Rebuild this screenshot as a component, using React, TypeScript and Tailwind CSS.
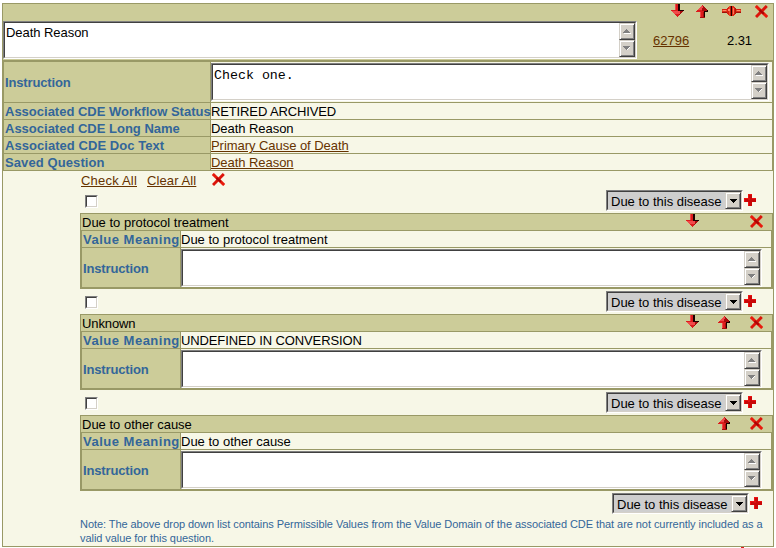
import React from 'react';

type Px = [number, number, number, number, string];

function Pixels({ w, h, rects, className = '' }: { w: number; h: number; rects: Px[]; className?: string }) {
  return (
    <svg width={w} height={h} viewBox={`0 0 ${w} ${h}`} shapeRendering="crispEdges" className={`block shrink-0 ${className}`}>
      {rects.map(([x, y, rw, rh, f], i) => (
        <rect key={i} x={x} y={y} width={rw} height={rh} fill={f} />
      ))}
    </svg>
  );
}

const R = '#dd1c1c';
const D = '#a80d0d';
const L = '#f04a4a';
const K = '#1a0000';

const upRects: Px[] = [
  [6, 0, 1, 1, R], [5, 1, 2, 1, L], [7, 1, 1, 1, D], [4, 2, 3, 1, L], [7, 2, 2, 1, D],
  [3, 3, 3, 1, L], [6, 3, 4, 1, D], [2, 4, 4, 1, L], [6, 4, 5, 1, D], [1, 5, 5, 1, R], [6, 5, 5, 1, D], [11, 5, 1, 1, K],
  [0, 6, 4, 1, R], [4, 6, 4, 1, R], [8, 6, 4, 1, K],
  [4, 7, 3, 5, R], [4, 7, 1, 5, L], [7, 7, 1, 5, D], [8, 7, 1, 5, K], [4, 12, 5, 1, D],
];

const downRects: Px[] = [
  [4, 0, 4, 6, R], [4, 0, 1, 6, L], [7, 0, 2, 6, K],
  [0, 6, 7, 1, R], [7, 6, 6, 1, K], [1, 7, 8, 1, L], [9, 7, 3, 1, D], [2, 8, 7, 1, L], [9, 8, 2, 1, D],
  [3, 9, 6, 1, L], [9, 9, 1, 1, D], [4, 10, 4, 1, R], [8, 10, 1, 1, D], [5, 11, 3, 1, R], [6, 12, 1, 1, R],
];

function Up({ className }: { className?: string }) {
  return <Pixels w={13} h={13} rects={upRects} className={className} />;
}
function Down({ className }: { className?: string }) {
  return <Pixels w={13} h={13} rects={downRects} className={className} />;
}

function Cross({ className = '' }: { className?: string }) {
  return (
    <svg width="13" height="13" viewBox="0 0 13 13" className={`block shrink-0 ${className}`}>
      <path d="M0.8 1L12.2 12" stroke="#e81a0c" strokeWidth="3" />
      <path d="M11.8 1L1 12" stroke="#dc140a" strokeWidth="2.9" />
      <path d="M4.5 5L8.8 8.8" stroke="#a80404" strokeWidth="2.2" />
    </svg>
  );
}

function Plug({ className = '' }: { className?: string }) {
  return (
    <Pixels
      w={19}
      h={12}
      className={className}
      rects={[
        [0, 4, 5, 1, '#d82010'], [0, 5, 19, 1, '#f05030'], [0, 6, 19, 1, '#d83018'], [14, 4, 5, 1, '#d82010'], [0, 7, 5, 1, '#a01008'], [14, 7, 5, 1, '#a01008'],
        [5, 3, 1, 6, '#d82010'], [6, 2, 1, 8, '#d82010'], [7, 1, 1, 10, '#f04828'], [8, 1, 1, 10, '#c01c0c'], [9, 1, 1, 10, '#200000'],
        [10, 1, 2, 10, '#e03018'], [11, 3, 1, 6, '#f87858'], [12, 2, 1, 8, '#d82010'], [13, 3, 1, 6, '#b01808'],
        [6, 4, 2, 2, '#ff8868'], [1, 5, 3, 1, '#ff8868'], [15, 5, 3, 1, '#ff8868'],
      ]}
    />
  );
}

function Plus({ className = '' }: { className?: string }) {
  return (
    <Pixels
      w={12}
      h={12}
      className={className}
      rects={[[4, 0, 4, 12, '#ee1111'], [0, 4, 12, 4, '#ee1111'], [5, 1, 3, 11, '#c80808'], [1, 5, 11, 3, '#c80808'], [4, 4, 2, 2, '#e01010']]}
    />
  );
}

function ScrollButton({ up }: { up?: boolean }) {
  return (
    <div className="flex h-[17px] w-4 items-center justify-center border border-t-[#d4d0c8] border-l-[#d4d0c8] border-r-[#404040] border-b-[#404040] bg-[#d4d0c8] shadow-[inset_1px_1px_0_#fff,inset_-1px_-1px_0_#808080]">
      <Pixels
        w={8}
        h={5}
        rects={
          up
            ? [[3, 0, 1, 1, '#808080'], [2, 1, 3, 1, '#808080'], [1, 2, 5, 1, '#808080'], [0, 3, 7, 1, '#808080'], [1, 4, 7, 1, '#fff']]
            : [[0, 0, 7, 1, '#808080'], [1, 1, 5, 1, '#808080'], [2, 2, 3, 1, '#808080'], [3, 3, 1, 1, '#808080'], [6, 1, 1, 1, '#fff'], [5, 2, 1, 1, '#fff'], [4, 3, 1, 1, '#fff']]
        }
      />
    </div>
  );
}

function TextBox({ children, className }: { children?: React.ReactNode; className: string }) {
  return (
    <div className={`flex h-[38px] shrink-0 justify-between border border-t-[#808080] border-l-[#808080] border-r-white border-b-white bg-white ${className}`}>
      <div className="flex grow justify-between border border-t-[#404040] border-l-[#404040] border-r-[#d4d0c8] border-b-[#d4d0c8]">
        <div className="pl-px leading-[19px]">{children}</div>
        <div className="flex flex-col justify-between bg-[#eae8e4]">
          <ScrollButton up />
          <ScrollButton />
        </div>
      </div>
    </div>
  );
}

function Select() {
  return (
    <div className="flex h-[21px] w-[137px] shrink-0 border border-t-[#808080] border-l-[#808080] border-r-white border-b-white bg-[#cecece]">
      <div className="flex grow justify-between border border-t-[#404040] border-l-[#404040] border-r-[#d4d0c8] border-b-[#d4d0c8]">
        <span className="pl-[3px] text-[13px] leading-[19px]">Due to this disease</span>
        <div className="flex h-[17px] w-4 shrink-0 items-center justify-center border border-t-[#d4d0c8] border-l-[#d4d0c8] border-r-[#404040] border-b-[#404040] bg-[#d4d0c8] shadow-[inset_1px_1px_0_#fff,inset_-1px_-1px_0_#808080]">
          <Pixels w={7} h={4} rects={[[0, 0, 7, 1, '#000'], [1, 1, 5, 1, '#000'], [2, 2, 3, 1, '#000'], [3, 3, 1, 1, '#000']]} />
        </div>
      </div>
    </div>
  );
}

function Checkbox() {
  return (
    <div className="size-[13px] border border-t-[#808080] border-l-[#808080] border-r-white border-b-white">
      <div className="size-[11px] border border-t-[#404040] border-l-[#404040] border-r-[#d4d0c8] border-b-[#d4d0c8] bg-white" />
    </div>
  );
}

function InfoRow({ label, labelClass, children }: { label: string; labelClass: string; children: React.ReactNode }) {
  return (
    <div className="flex h-[17px] border-b border-[#999966] leading-[18px]">
      <div className={`w-[207px] shrink-0 border-r border-[#999966] bg-[#cccc99] pl-px font-bold text-[#336699] ${labelClass}`}>{label}</div>
      {children}
    </div>
  );
}

function ValueBlock({ title, titleClass, meaning, meaningClass, up, down }: {
  title: string; titleClass: string; meaning: string; meaningClass: string; up?: boolean; down?: boolean;
}) {
  return (
    <>
      <div className="flex h-6 pt-px">
        <div className="w-[526px] shrink-0 pt-[5px] pl-[5px]"><Checkbox /></div>
        <Select />
        <Plus className="mt-1 ml-px" />
      </div>
      <div className="h-[76px] w-[693px] border border-[#999966]">
        <div className="flex h-[17px] border-b border-[#999966] bg-[#cccc99] leading-[18px]">
          <span className={`w-[605px] pl-px ${titleClass}`}>{title}</span>
          <div className="w-8">{down && <Down />}</div>
          <div className="w-8">{up && <Up className="mt-px" />}</div>
          <Cross className="mt-px" />
        </div>
        <div className="h-[57px] border-x border-b border-[#999966]">
          <div className="flex h-[17px] border-b border-[#999966] leading-[18px]">
            <div className="w-[99px] shrink-0 border-r border-[#999966] bg-[#cccc99] pl-px font-bold tracking-[0.5px] text-[#336699]">Value Meaning</div>
            <span className={meaningClass}>{meaning}</span>
          </div>
          <div className="flex h-[39px]">
            <div className="flex w-[99px] shrink-0 items-center border-r border-[#999966] bg-[#cccc99] pt-0.5 pl-px font-bold tracking-[-0.15px] text-[#336699]">Instruction</div>
            <TextBox className="mt-px w-[581px]" />
          </div>
        </div>
      </div>
    </>
  );
}

export default function App() {
  return (
    <div className="h-[548px] w-[776px] overflow-hidden bg-white pt-[3px] pl-[2px] font-['Liberation_Sans',Arial,sans-serif] text-[13px] whitespace-nowrap text-black">
      <div className="h-[544px] w-[772px] border border-[#999966] bg-[#f7f7e7]">
        <div className="h-14 bg-[#cccc99]">
          <div className="flex h-[17px] pl-[668px]">
            <Down />
            <Up className="mt-px ml-3" />
            <Plug className="mt-px ml-[13px]" />
            <Cross className="mt-px ml-[14px]" />
          </div>
          <div className="flex">
            <TextBox className="w-[634px]"><span className="tracking-[-0.05px]">Death Reason</span></TextBox>
            <div className="flex w-[136px] pt-px leading-[38px]">
              <span className="w-[90px] pl-4 text-[#663300] underline">62796</span>
              <span className="tracking-[-0.1px]">2.31</span>
            </div>
          </div>
        </div>
        <div className="border-x border-t-2 border-[#999966]">
          <div className="flex h-[41px] border-b border-[#999966]">
            <div className="flex w-[207px] shrink-0 items-center border-r border-[#999966] bg-[#cccc99] pt-0.5 pl-px font-bold tracking-[-0.15px] text-[#336699]">Instruction</div>
            <TextBox className="mt-px w-[558px]"><span className="font-['Liberation_Mono','Courier_New',monospace] text-[13.3px]">Check one.</span></TextBox>
          </div>
          <InfoRow label="Associated CDE Workflow Status" labelClass="tracking-[0px]"><span className="tracking-[-0.13px]">RETIRED ARCHIVED</span></InfoRow>
          <InfoRow label="Associated CDE Long Name" labelClass="tracking-[0px]"><span className="tracking-[-0.05px]">Death Reason</span></InfoRow>
          <InfoRow label="Associated CDE Doc Text" labelClass="tracking-[0.05px]"><span className="tracking-[-0.05px] text-[#663300] underline">Primary Cause of Death</span></InfoRow>
          <InfoRow label="Saved Question" labelClass="tracking-[0.1px]"><span className="tracking-[-0.05px] text-[#663300] underline">Death Reason</span></InfoRow>
        </div>
        <div className="pl-[77px]">
          <div className="flex h-[18px] pl-px leading-[20px] text-[#663300]">
            <span className="w-[66px] tracking-[0.2px]"><span className="underline">Check All</span></span>
            <span className="w-[65px] tracking-[0.1px]"><span className="underline">Clear All</span></span>
            <Cross className="mt-0.5" />
          </div>
          <ValueBlock title="Due to protocol treatment" titleClass="tracking-[0px]" meaning="Due to protocol treatment" meaningClass="tracking-[0px]" down />
          <div className="h-px" />
          <ValueBlock title="Unknown" titleClass="tracking-[-0.1px]" meaning="UNDEFINED IN CONVERSION" meaningClass="tracking-[-0.12px]" up down />
          <div className="h-px" />
          <ValueBlock title="Due to other cause" titleClass="" meaning="Due to other cause" meaningClass="" up />
          <div className="flex h-[26px] pt-[2px] pl-[532px]">
            <Select />
            <Plus className="mt-1 ml-px" />
          </div>
          <p className="text-[11px] leading-[14px] tracking-[-0.06px] text-[#336699]">
            Note: The above drop down list contains Permissible Values from the Value Domain of the associated CDE that are not currently included as a
            <br />
            valid value for this question.
          </p>
        </div>
      </div>
      <div className="ml-[739px] h-px w-[3px] bg-[#dd1c1c]" />
    </div>
  );
}
